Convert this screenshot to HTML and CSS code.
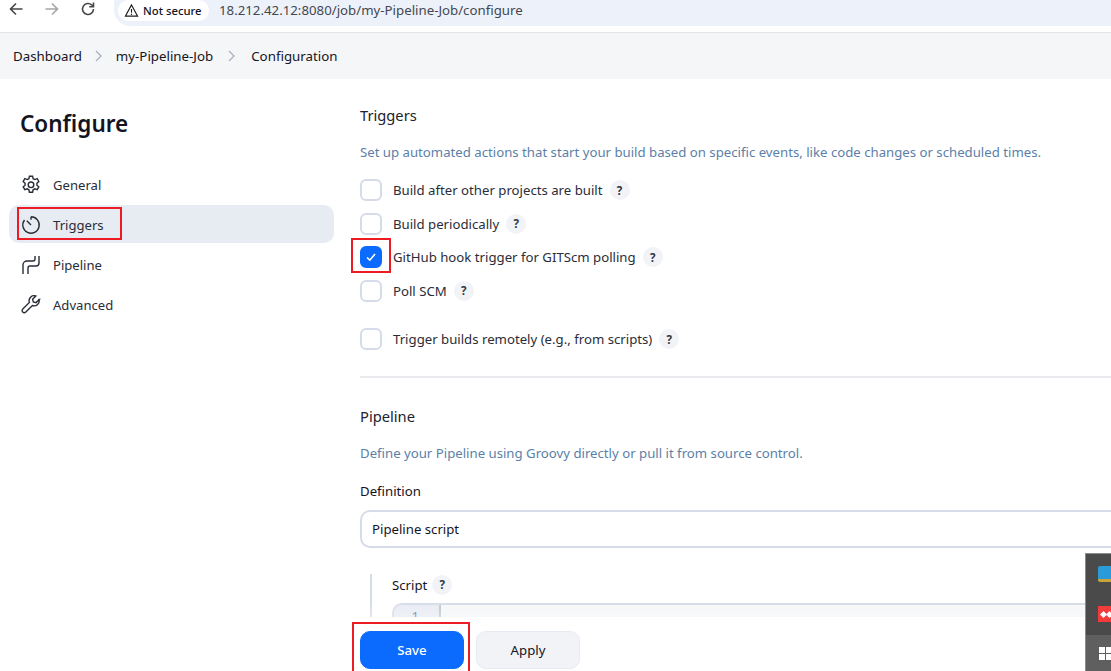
FILE: index.html
```html
<!DOCTYPE html>
<html lang="en">
<head>
    <meta charset="UTF-8">
    <title>my-Pipeline-Job Config</title>
    <link rel="stylesheet" href="styles.css">
</head>
<body>
    <!-- Browser toolbar -->
    <div class="toolbar">
        <svg class="tool-icon" viewBox="0 0 16 16"><path d="M14.500 8H2.500M8 2.500 2.500 8 8 13.500"/></svg>
        <svg class="tool-icon dim" viewBox="0 0 16 16"><path d="M1.500 8h12M8 2.500 13.500 8 8 13.500"/></svg>
        <svg class="tool-icon" viewBox="0 0 16 16"><path d="M13.500 8a5.500 5.500 0 1 1-1.700-4L13.500 5.800M13.500 1.500v4.300H9.200"/></svg>
        <div class="address">
            <span class="chip">
                <svg class="warn" viewBox="0 0 16 16"><path d="M8 2 1.500 14h13zM8 6.500v4M8 11.500v1.200"/></svg>
                Not secure
            </span>
            <span class="url">18.212.42.12:8080/job/my-Pipeline-Job/configure</span>
        </div>
    </div>

    <!-- Breadcrumb -->
    <nav class="crumbs">
        <a href="#">Dashboard</a>
        <svg class="sep" viewBox="0 0 10 14"><path d="m2 2 5 5-5 5"/></svg>
        <a href="#">my-Pipeline-Job</a>
        <svg class="sep" viewBox="0 0 10 14"><path d="m2 2 5 5-5 5"/></svg>
        <a href="#">Configuration</a>
    </nav>

    <div class="layout">
        <aside class="sidebar">
            <h1>Configure</h1>
            <a class="side-item" href="#">
                <svg viewBox="0 0 20 20"><path d="M8.400 1.200h3.200l.5 2.500 1.700.9 2.400-.9 1.600 2.800-1.900 1.700v2l1.900 1.600-1.600 2.800-2.400-.8-1.700 1-.5 2.500H8.400l-.5-2.500-1.700-1-2.400.8-1.600-2.800 1.900-1.600v-2L2.200 6.500l1.600-2.800 2.400.9 1.700-.9z"/><circle cx="10" cy="9.800" r="2.800"/></svg>
                General
            </a>
            <a class="side-item active" href="#">
                <svg viewBox="0 0 20 20"><path d="M10 1.800a8.200 8.200 0 1 1-6.500 3.200M10 1.800v3M5.800 5.800l4.200 4.200"/></svg>
                Triggers
                <span class="mark mark-nav"></span>
            </a>
            <a class="side-item" href="#">
                <svg viewBox="0 0 20 20"><path d="M18 1v7a3 3 0 0 1-3 3H9a2 2 0 0 0-2 2v6M14 1v3a2 2 0 0 1-2 2H6a4 4 0 0 0-4 4v9"/></svg>
                Pipeline
            </a>
            <a class="side-item" href="#">
                <svg viewBox="0 0 20 20"><path d="M18.300 4.400 15 7.600l-2.700-.7-.7-2.700 3.200-3.200a5 5 0 0 0-6.400 6.400l-6.600 6.500a2.100 2.100 0 0 0 3 3.200l6.600-6.600a5 5 0 0 0 6.600-6.100z"/></svg>
                Advanced
            </a>
        </aside>

        <main class="content">
            <section class="triggers">
                <h2>Triggers</h2>
                <p class="hint">Set up automated actions that start your build based on specific events, like code changes or scheduled times.</p>

                <div class="check-row">
                    <span class="box"></span>
                    <span>Build after other projects are built</span>
                    <span class="help">?</span>
                </div>
                <div class="check-row">
                    <span class="box"></span>
                    <span>Build periodically</span>
                    <span class="help">?</span>
                </div>
                <div class="check-row">
                    <span class="box checked">
                        <svg viewBox="0 0 12 12"><path d="m2 6.500 2.800 2.700L10 3"/></svg>
                        <span class="mark mark-check"></span>
                    </span>
                    <span>GitHub hook trigger for GITScm polling</span>
                    <span class="help">?</span>
                </div>
                <div class="check-row">
                    <span class="box"></span>
                    <span>Poll SCM</span>
                    <span class="help">?</span>
                </div>
                <div class="check-row spaced">
                    <span class="box"></span>
                    <span>Trigger builds remotely (e.g., from scripts)</span>
                    <span class="help">?</span>
                </div>
            </section>

            <section class="pipeline">
                <h2>Pipeline</h2>
                <p class="hint">Define your Pipeline using Groovy directly or pull it from source control.</p>
                <label class="field-label">Definition</label>
                <div class="select">Pipeline script</div>
                <div class="script-block">
                    <div class="script-label">Script <span class="help">?</span></div>
                    <div class="editor">
                        <span class="gutter">1</span>
                    </div>
                </div>
            </section>
        </main>
    </div>

    <!-- Sticky save bar -->
    <div class="save-bar">
        <button class="btn primary">Save</button>
        <button class="btn">Apply</button>
        <span class="mark mark-save"></span>
    </div>

    <!-- Windows tray popup -->
    <div class="tray">
        <div class="tray-item"><span class="tray-app"></span></div>
        <div class="tray-item"><span class="tray-red"><i></i><i></i></span></div>
        <div class="tray-item hover"><span class="tray-grid"><i></i><i></i><i></i><i></i></span></div>
    </div>
</body>
</html>
```

FILE: styles.css
```css
* {
    box-sizing: border-box;
}

html, body {
    height: 100%;
}

body {
    margin: 0;
    overflow: hidden;
    position: relative;
    font-family: 'Noto Sans', 'Open Sans', sans-serif;
    font-size: 13.2px;
    color: #14141f;
    background-color: white;
}

a {
    color: inherit;
    text-decoration: none;
}

/* Toolbar */
.toolbar {
    display: flex;
    align-items: flex-start;
    height: 33px;
    padding-left: 8px;
    background-color: white;
    border-bottom: 1px solid #e3e4e6;
}

.tool-icon {
    width: 16px;
    height: 16px;
    margin: 1px 20px 0 0;
    fill: none;
    stroke: #474747;
    stroke-width: 1.600;
}

.tool-icon.dim {
    stroke: #a4a6a8;
}

.address {
    display: flex;
    align-items: center;
    flex: 1;
    height: 26px;
    margin-left: -2px;
    padding-left: 4px;
    background-color: #edf2fa;
    border-radius: 0 0 0 16px;
}

.chip {
    display: flex;
    align-items: center;
    gap: 4px;
    width: 91px;
    height: 21px;
    margin-top: -5px;
    padding-left: 6px;
    font-size: 11.300px;
    font-weight: 500;
    white-space: nowrap;
    background-color: white;
    border-radius: 11px;
}

.warn {
    width: 15px;
    height: 15px;
    flex-shrink: 0;
    fill: none;
    stroke: #1f1f1f;
    stroke-width: 1.200;
}

.url {
    margin: -6px 0 0 10px;
    font-size: 13.250px;
    color: #44474f;
}

/* Breadcrumb */
.crumbs {
    display: flex;
    align-items: center;
    height: 46px;
    padding: 0 0 1px 13px;
    font-size: 13.300px;
    background-color: #f5f6f8;
}

.sep {
    width: 10px;
    height: 14px;
    margin: 0 12px;
    fill: none;
    stroke: #a9b0c0;
    stroke-width: 1.300;
}

.sep:nth-of-type(2) {
    margin: 0 14px;
}

/* Layout */
.layout {
    display: flex;
}

.sidebar {
    width: 334px;
    flex-shrink: 0;
    padding: 28px 0 0 9px;
}

.sidebar h1 {
    margin: 0 0 24px 11px;
    font-size: 22.500px;
    font-weight: 600;
    line-height: 34px;
}

.side-item {
    position: relative;
    display: flex;
    align-items: center;
    gap: 12px;
    height: 38px;
    margin-bottom: 2px;
    padding: 1px 0 0 12px;
    font-size: 13.100px;
    color: #2a2d38;
    border-radius: 10px;
}

.side-item svg {
    width: 20px;
    height: 20px;
    fill: none;
    stroke: #2a2d38;
    stroke-width: 1.400;
}

.side-item.active {
    background-color: #e7ebf2;
}

.content {
    flex: 1;
    min-width: 0;
    padding: 23px 0 0 26px;
}

h2 {
    margin: 0;
    font-size: 14.700px;
    font-weight: 400;
    line-height: 26px;
    color: #20222c;
}

.hint {
    margin: 14px 0 0;
    line-height: 20px;
    color: #5b7fa8;
    white-space: nowrap;
}

.triggers {
    padding-bottom: 20px;
    border-bottom: 2px solid #e8eaee;
}

.hint + .check-row {
    margin-top: 11px;
}

.check-row {
    display: flex;
    align-items: center;
    gap: 11px;
    height: 33.500px;
    padding-top: 1px;
    color: #2a2d38;
}

.check-row.spaced {
    margin-top: 15px;
}

.box {
    position: relative;
    width: 22px;
    height: 22px;
    border: 2px solid #d5dbe8;
    border-radius: 6px;
    background-color: white;
}

.box.checked {
    display: flex;
    align-items: center;
    justify-content: center;
    background-color: #0b6bff;
    border-color: #0b6bff;
}

.box.checked svg {
    width: 12px;
    height: 12px;
    fill: none;
    stroke: white;
    stroke-width: 1.600;
}

.help {
    display: inline-flex;
    align-items: center;
    justify-content: center;
    width: 20px;
    height: 20px;
    margin-left: -4px;
    font-size: 11.500px;
    font-weight: 700;
    color: #333845;
    background-color: #f1f3f7;
    border-radius: 50%;
}

.pipeline {
    padding-top: 25px;
}

.field-label {
    display: block;
    margin-top: 18px;
    line-height: 20px;
}

.select {
    display: flex;
    align-items: center;
    width: 780px;
    height: 38px;
    margin-top: 9px;
    padding-left: 10px;
    border: 2px solid #d5dbe8;
    border-radius: 10px;
}

.script-block {
    margin: 26px 0 0 10px;
    padding-left: 20px;
    border-left: 2px solid #d5dbe8;
}

.script-label {
    display: flex;
    align-items: center;
    gap: 9px;
    height: 22px;
}

.editor {
    display: flex;
    width: 760px;
    height: 60px;
    margin-top: 7px;
    border: 2px solid #d5dbe8;
    border-radius: 10px;
    background-color: #f5f6f8;
}

.gutter {
    width: 47px;
    padding: 2px 20px 0 0;
    text-align: right;
    font-size: 13px;
    color: #5b7fa8;
    background-color: #e7ebf2;
    border-right: 2px solid #c0c4cc;
    border-radius: 8px 0 0 0;
}

/* Save bar */
.save-bar {
    position: absolute;
    left: 334px;
    right: 0;
    bottom: 0;
    display: flex;
    gap: 12px;
    height: 54px;
    padding: 14px 0 0 26px;
    background-color: white;
}

.save-bar::before {
    content: "";
    position: absolute;
    left: 0;
    right: 0;
    top: -16px;
    height: 16px;
    background: linear-gradient(rgba(255, 255, 255, 0), rgba(255, 255, 255, 0.3));
}

.btn {
    width: 104px;
    height: 38px;
    font-family: inherit;
    font-size: 13.200px;
    color: #14141f;
    background-color: #f1f3f7;
    border: 1px solid #e7ebf2;
    border-radius: 10px;
}

.btn.primary {
    font-weight: 500;
    color: white;
    background-color: #0b6bff;
    border-color: #0b6bff;
}

/* Red annotation boxes */
.mark {
    position: absolute;
    border: 2px solid #ed1c24;
}

.mark-nav {
    left: 8px;
    top: 2px;
    width: 105px;
    height: 33px;
}

.mark-check {
    left: -11px;
    top: -10px;
    width: 40px;
    height: 35px;
}

.mark-save {
    left: 18px;
    top: 5px;
    width: 118px;
    height: 60px;
}

/* Tray popup */
.tray {
    position: absolute;
    left: 1085px;
    top: 553px;
    width: 26px;
    height: 118px;
    background-color: #4a4a4a;
    border: 1px solid #8c8c8c;
    border-width: 1px 0 0 1px;
}

.tray-item {
    height: 40px;
    padding: 12px 0 0 12px;
    overflow: hidden;
}

.tray-item.hover {
    height: 37px;
    margin-top: 1px;
    padding-left: 13px;
    background-color: #5f5f5f;
}

.tray-app {
    display: block;
    width: 16px;
    height: 16px;
    background-color: #2b9ad8;
    border-bottom: 3px solid #c9a23a;
    border-radius: 2px;
}

.tray-red {
    display: flex;
    align-items: center;
    justify-content: center;
    gap: 1px;
    width: 16px;
    height: 16px;
    background-color: #f23b3b;
}

.tray-red i {
    width: 5px;
    height: 5px;
    background-color: white;
    transform: rotate(45deg);
}

.tray-grid {
    display: grid;
    grid-template-columns: 6px 6px;
    gap: 1px;
    width: 13px;
}

.tray-grid i {
    height: 6px;
    background-color: white;
}
```
